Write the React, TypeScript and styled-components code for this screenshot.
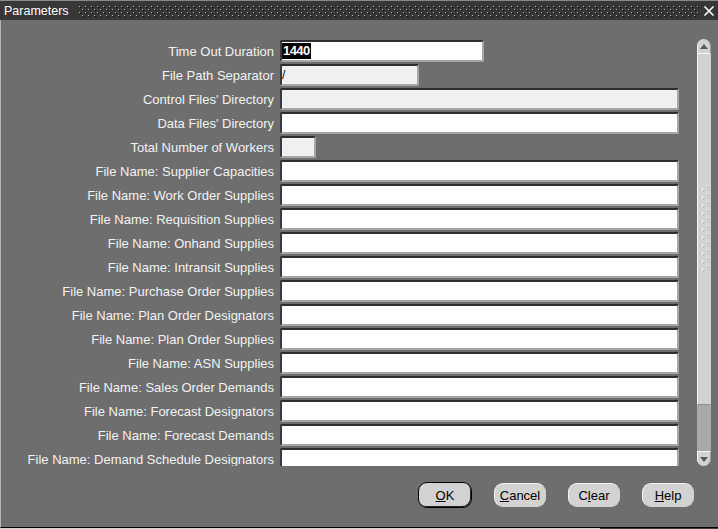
import * as React from 'react';
import styled, { createGlobalStyle } from 'styled-components';

const GlobalStyle = createGlobalStyle`
  html, body {
    margin: 0;
    padding: 0;
    background: #6e6e6e;
  }
  body {
    font-family: "Liberation Sans", Arial, sans-serif;
    font-size: 13px;
  }
`;

interface Param {
  label: string;
  width: number;
  tone: 'white' | 'grey';
  value?: string;
  selected?: boolean;
}

const params: Param[] = [
  { label: 'Time Out Duration', width: 204, tone: 'white', value: '1440', selected: true },
  { label: 'File Path Separator', width: 139, tone: 'grey', value: '/' },
  { label: "Control Files' Directory", width: 399, tone: 'grey' },
  { label: "Data Files' Directory", width: 399, tone: 'white' },
  { label: 'Total Number of Workers', width: 36, tone: 'grey' },
  { label: 'File Name: Supplier Capacities', width: 399, tone: 'white' },
  { label: 'File Name: Work Order Supplies', width: 399, tone: 'white' },
  { label: 'File Name: Requisition Supplies', width: 399, tone: 'white' },
  { label: 'File Name: Onhand Supplies', width: 399, tone: 'white' },
  { label: 'File Name: Intransit Supplies', width: 399, tone: 'white' },
  { label: 'File Name: Purchase Order Supplies', width: 399, tone: 'white' },
  { label: 'File Name: Plan Order Designators', width: 399, tone: 'white' },
  { label: 'File Name: Plan Order Supplies', width: 399, tone: 'white' },
  { label: 'File Name: ASN Supplies', width: 399, tone: 'white' },
  { label: 'File Name: Sales Order Demands', width: 399, tone: 'white' },
  { label: 'File Name: Forecast Designators', width: 399, tone: 'white' },
  { label: 'File Name: Forecast Demands', width: 399, tone: 'white' },
  { label: 'File Name: Demand Schedule Designators', width: 399, tone: 'white' },
];

const Window = styled.div`
  width: 718px;
  height: 529px;
  display: flex;
  flex-direction: column;
  overflow: hidden;
  background: #6e6e6e;
`;

const TitleBar = styled.div`
  height: 20px;
  flex: none;
  display: flex;
  align-items: center;
  background: #373737;
  border-top: 1px solid #8a8a8a;
  box-sizing: border-box;
  padding-left: 4px;
  padding-right: 3px;
  color: #ffffff;
  font-size: 12.5px;
`;

const Title = styled.span`
  margin-right: 10px;
  white-space: nowrap;
`;

const Grip = styled.svg`
  flex: 1;
  height: 12px;
  display: block;
`;

const CloseBox = styled.svg`
  margin-left: 4px;
  width: 12px;
  height: 12px;
  flex: none;
`;

const Body = styled.div`
  flex: 1;
  display: flex;
  flex-direction: column;
  border-left: 1px solid #b4b4b4;
  border-bottom: 1px solid #000;
  min-height: 0;
`;

const ContentRow = styled.div`
  display: flex;
  height: 446px;
  flex: none;
`;

const FormView = styled.div`
  flex: 1;
  overflow: hidden;
  padding-top: 20px;
  box-sizing: border-box;
`;

const FormGrid = styled.div`
  display: grid;
  grid-template-columns: 273px auto;
  grid-auto-rows: 22px;
  column-gap: 6px;
  row-gap: 2px;
  align-items: start;
`;

const Label = styled.label`
  text-align: right;
  color: #f2f2f2;
  white-space: nowrap;
  height: 22px;
  box-sizing: border-box;
  padding-top: 1px;
  line-height: 21px;
  font-size: 13px;
`;

const Field = styled.div<{ $w: number; $tone: 'white' | 'grey' }>`
  width: ${p => p.$w}px;
  height: 22px;
  box-sizing: border-box;
  background: ${p => (p.$tone === 'white' ? '#ffffff' : '#f0f0f0')};
  border-top: 2px solid #2e2e2e;
  border-left: 2px solid #3a3a3a;
  border-right: 2px solid #a6a6a6;
  border-bottom: 2px solid #a6a6a6;
  border-radius: 2px;
  padding: 0;
  display: flex;
  align-items: center;
  color: #000;
  font-size: 12px;
`;

const Selected = styled.span`
  background: #000;
  color: #fff;
  font-weight: bold;
  font-size: 13px;
  letter-spacing: -0.6px;
  line-height: 16px;
  padding: 0 1px;
`;

const ScrollBar = styled.div`
  width: 14px;
  margin: 19px 7px 0 6px;
  display: flex;
  flex-direction: column;
  flex: none;
`;

const ArrowCap = styled.div<{ $down?: boolean }>`
  height: 15px;
  flex: none;
  background: #d2d2d2;
  border-left: 1px solid #f4f4f4;
  border-right: 1px solid #9a9a9a;
  box-sizing: border-box;
  border-radius: ${p => (p.$down ? '0 0 7px 7px' : '7px 7px 0 0')};
  border-${p => (p.$down ? 'top' : 'bottom')}: 1px solid #f4f4f4;
  display: flex;
  align-items: center;
  justify-content: center;
`;

const Thumb = styled.div`
  height: 351px;
  flex: none;
  background: #d2d2d2;
  border-left: 1px solid #f4f4f4;
  border-bottom: 1px solid #8e8e8e;
  box-sizing: border-box;
  display: flex;
  align-items: center;
  justify-content: center;
`;

const Track = styled.div`
  flex: 1;
  background: #a9a9a9;
`;

const ButtonBar = styled.div`
  display: flex;
  justify-content: flex-end;
  align-items: center;
  padding: 16px 24px 0 0;
  gap: 22px;
`;

const Button = styled.button<{ $default?: boolean; $w: number }>`
  width: ${p => p.$w}px;
  height: ${p => (p.$default ? 26 : 24)}px;
  box-sizing: border-box;
  background: #d2d2d2;
  border-radius: 9px;
  border: ${p => (p.$default ? '1px solid #000' : '1px solid #d2d2d2')};
  border-top-color: ${p => (p.$default ? '#000' : '#f4f4f4')};
  border-left-color: ${p => (p.$default ? '#000' : '#f4f4f4')};
  box-shadow: ${p => (p.$default ? 'inset -1px -1px 0 #222' : 'none')};
  font-family: "Liberation Sans", Arial, sans-serif;
  font-size: 13px;
  color: #000;
  padding: 0;
  cursor: default;
  margin-top: ${p => (p.$default ? 0 : 1)}px;
  align-self: flex-start;
`;

const Key = styled.span`
  text-decoration: underline;
`;

const BottomEdge = styled.div`
  height: 1px;
  flex: none;
  background: linear-gradient(to right, #d8d8d8 0, #d8d8d8 600px, #3a3a3a 600px);
`;

function GripPattern() {
  return (
    <Grip preserveAspectRatio="none">
      <defs>
        <pattern id="grip" width="6" height="6" patternUnits="userSpaceOnUse">
          <rect x="0" y="1" width="1" height="1" fill="#b8b8b8" />
          <rect x="1" y="2" width="1" height="1" fill="#0c0c0c" />
          <rect x="3" y="4" width="1" height="1" fill="#b8b8b8" />
          <rect x="4" y="5" width="1" height="1" fill="#0c0c0c" />
        </pattern>
      </defs>
      <rect x="0" y="0" width="100%" height="12" fill="url(#grip)" />
    </Grip>
  );
}

function ScrollGrip() {
  const dots = [];
  for (let i = 0; i < 11; i++) {
    dots.push(<rect key={'a' + i} x={3} y={i * 8} width={2} height={2} fill="#ffffff" />);
    dots.push(<rect key={'b' + i} x={7} y={i * 8 - 4} width={2} height={2} fill="#ffffff" />);
    dots.push(<rect key={'c' + i} x={4} y={i * 8 + 1} width={1} height={1} fill="#8a8a8a" />);
    dots.push(<rect key={'d' + i} x={8} y={i * 8 - 3} width={1} height={1} fill="#8a8a8a" />);
  }
  return (
    <svg width="12" height="88" viewBox="0 -4 12 88">
      {dots}
    </svg>
  );
}

export default function App() {
  return (
    <Window>
      <GlobalStyle />
      <TitleBar>
        <Title>Parameters</Title>
        <GripPattern />
        <CloseBox viewBox="0 0 12 12">
          <path d="M1.5 1.5 L10.5 10.5 M10.5 1.5 L1.5 10.5" stroke="#ffffff" strokeWidth="1.6" />
        </CloseBox>
      </TitleBar>
      <Body>
        <ContentRow>
          <FormView>
            <FormGrid>
              {params.map(p => (
                <React.Fragment key={p.label}>
                  <Label>{p.label}</Label>
                  <Field $w={p.width} $tone={p.tone}>
                    {p.selected ? <Selected>{p.value}</Selected> : p.value}
                  </Field>
                </React.Fragment>
              ))}
            </FormGrid>
          </FormView>
          <ScrollBar>
            <ArrowCap>
              <svg width="8" height="5" viewBox="0 0 8 5">
                <path d="M0 5 L4 0 L8 5 Z" fill="#5a5a5a" />
              </svg>
            </ArrowCap>
            <Thumb>
              <ScrollGrip />
            </Thumb>
            <Track />
            <ArrowCap $down>
              <svg width="8" height="5" viewBox="0 0 8 5">
                <path d="M0 0 L4 5 L8 0 Z" fill="#5a5a5a" />
              </svg>
            </ArrowCap>
          </ScrollBar>
        </ContentRow>
        <ButtonBar>
          <Button $default $w={54}><Key>O</Key>K</Button>
          <Button $w={52}><Key>C</Key>ancel</Button>
          <Button $w={52}>C<Key>l</Key>ear</Button>
          <Button $w={52}><Key>H</Key>elp</Button>
        </ButtonBar>
      </Body>
      <BottomEdge />
    </Window>
  );
}
